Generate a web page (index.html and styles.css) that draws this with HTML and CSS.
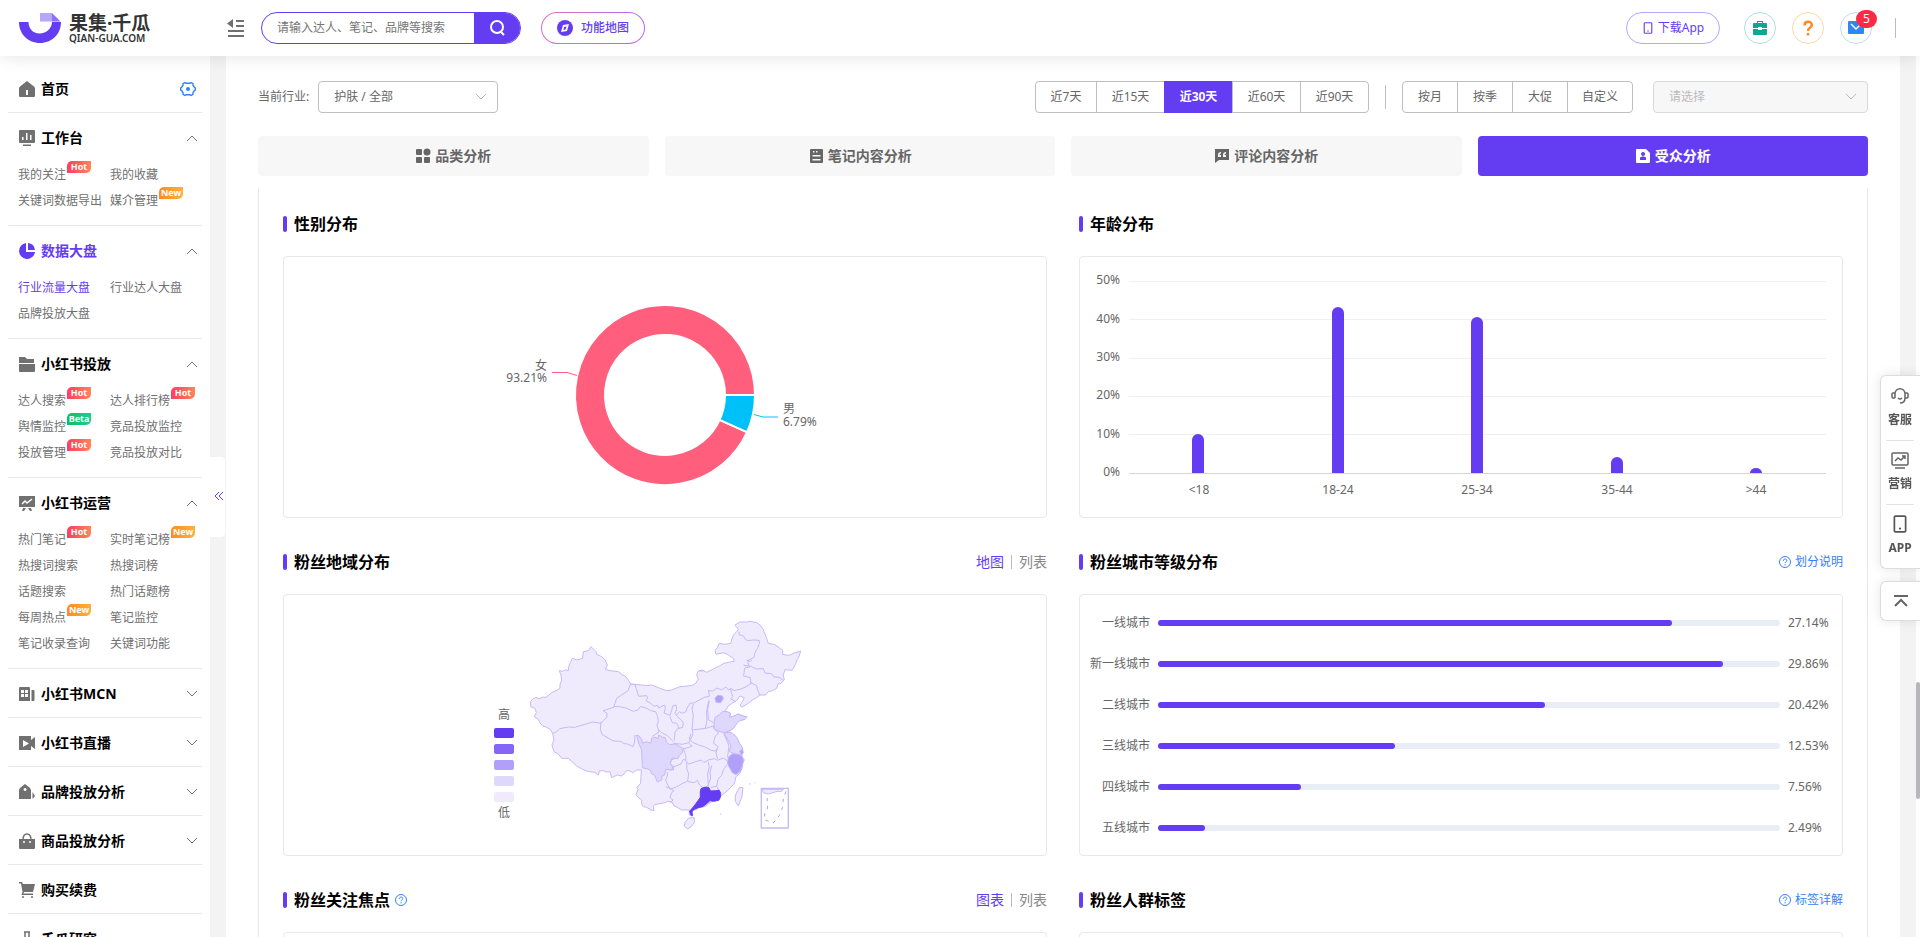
FILE: index.html
```
<!DOCTYPE html>
<html lang="zh-CN">
<head>
    <meta charset="UTF-8">
    <title>行业流量大盘 - 果集·千瓜</title>
    <link rel="stylesheet" href="styles.css">
</head>
<body>
    <svg class="defs" width="0" height="0">
        <symbol id="up" viewBox="0 0 12 12"><path d="M1 9l5-5 5 5" fill="none" stroke="currentColor"/></symbol>
        <symbol id="down" viewBox="0 0 12 12"><path d="M1 3l5 5 5-5" fill="none" stroke="currentColor"/></symbol>
        <symbol id="help" viewBox="0 0 12 12"><circle cx="6" cy="6" r="5.5" fill="none" stroke="currentColor"/><path d="M4.3 4.8c0-2.4 3.5-2.2 3.5-.2 0 1.200-1.800 1.300-1.800 2.600M6 8.200v1.200" fill="none" stroke="currentColor"/></symbol>
        <symbol id="phone" viewBox="0 0 16 16"><rect x="3" y="1" width="10" height="14" rx="1" fill="none" stroke="currentColor" stroke-width="1.500"/><circle cx="8" cy="12" r="1" fill="currentColor"/></symbol>
    </svg>

    <header class="header">
        <a class="logo" href="#">
            <svg width="42" height="30" viewBox="0 0 42 30"><path d="M0 9h9.500c0 6 4 11.500 11 11.500S33 15 33 9h9c0 12-9 21-21 21S0 21 0 9z" fill="#643df3"/><path d="M21 0h12v8.500H21z" fill="#b7a7fa"/><path d="M33 0l8.500 8.500H33z" fill="#8d70f7"/></svg>
            <span class="logo-text"><b>果集·千瓜</b><small>QIAN-GUA.COM</small></span>
        </a>
        <button class="fold" aria-label="收起菜单">
            <svg width="18" height="18" viewBox="0 0 18 18" fill="#707070"><path d="M0 4.500L6 0v9zM9 1h8v2H9zM9 6h8v2H9zM1 11h16v2H1zM1 16h16v2H1z"/></svg>
        </button>
        <form class="search">
            <input type="text" placeholder="请输入达人、笔记、品牌等搜索" aria-label="搜索">
            <button type="button" aria-label="搜索">
                <svg width="18" height="18" viewBox="0 0 18 18" fill="none" stroke="#fff" stroke-width="2"><circle cx="9" cy="8" r="6"/><path d="M13 13l3 3"/></svg>
            </button>
        </form>
        <button class="func-map">
            <svg width="16" height="16" viewBox="0 0 16 16"><circle cx="8" cy="8" r="8" fill="#643df3"/><path d="M6 5l6-1-2 7-6 1z" fill="#fff"/><path d="M7 7l2.500-.5-1 3L6.500 10z" fill="#643df3"/></svg>
            功能地图
        </button>
        <div class="header-right">
            <button class="download"><svg width="12" height="12"><use href="#phone"/></svg>下载App</button>
            <button class="round green" aria-label="工具箱">
                <svg width="14" height="14" viewBox="0 0 14 14" fill="#12a594"><path d="M4 2V0h6v2h3q1 0 1 1v4H9V6H5v1H0V3q0-1 1-1h3zm1 0h4V1H5zM0 8h5v1h4V8h5v5q0 1-1 1H1q-1 0-1-1z"/></svg>
            </button>
            <button class="round orange" aria-label="帮助">
                <svg width="14" height="16" viewBox="0 0 14 16"><path d="M3.500 5.500C3.500.5 11 .8 10.800 5 10.700 8 7 7.500 7 11M7 13v2.500" fill="none" stroke="#ff8a1f" stroke-width="2.500"/></svg>
            </button>
            <button class="round blue" aria-label="消息">
                <svg width="16" height="14" viewBox="0 0 16 14"><rect y="0" width="16" height="13" rx="1" fill="#2f86f6"/><path d="M3 3l5 5 5-5" fill="none" stroke="#fff" stroke-width="1.500"/></svg>
                <span class="count">5</span>
            </button>
            <i class="header-line"></i>
        </div>
    </header>

    <div class="layout">
        <nav class="sidebar">
            <section class="menu">
                <a class="menu-title" href="#">
                    <svg class="icon" viewBox="0 0 16 16"><path fill-rule="evenodd" d="M8 0l7 5.500q1 1 1 2V15q0 1-1 1H1q-1 0-1-1V7.500q0-1 1-2zM7 9v5h2V9z"/></svg>首页
                    <svg class="gear" viewBox="0 0 16 16"><path d="M5 1.500l1 .8h4l1-.8 2 1.200v1.800l1.500 2 .8.500v2l-.8.500-1.500 2v1.800l-2 1.200-1-.8H6l-1 .8-2-1.200v-1.800l-1.500-2L.7 9V7l.8-.5 1.500-2V2.700z" fill="none" stroke="currentColor" stroke-width="1.400"/><circle cx="8" cy="8" r="2" fill="currentColor"/></svg>
                </a>
            </section>
            <section class="menu">
                <a class="menu-title" href="#">
                    <svg class="icon" viewBox="0 0 16 16"><path fill-rule="evenodd" d="M1 0h14q1 0 1 1v11q0 1-1 1H1q-1 0-1-1V1q0-1 1-1zM3 7v3h1.500V7zM7 3v7h1.500V3zM11 5v5h1.500V5zM4 14.500h8V16H4z"/></svg>工作台
                    <svg class="arrow"><use href="#up"/></svg>
                </a>
                <div class="links">
                    <a href="#">我的关注<em class="hot">Hot</em></a><a href="#">我的收藏</a>
                    <a href="#">关键词数据导出</a><a href="#">媒介管理<em class="new">New</em></a>
                </div>
            </section>
            <section class="menu active">
                <a class="menu-title" href="#">
                    <svg class="icon" viewBox="0 0 16 16"><path d="M7 0v9h9A8 8 0 1 1 7 0zM9 0a8 8 0 0 1 7 7H9z"/></svg>数据大盘
                    <svg class="arrow"><use href="#up"/></svg>
                </a>
                <div class="links">
                    <a class="current" href="#">行业流量大盘</a><a href="#">行业达人大盘</a>
                    <a href="#">品牌投放大盘</a>
                </div>
            </section>
            <section class="menu">
                <a class="menu-title" href="#">
                    <svg class="icon" viewBox="0 0 16 16"><path d="M0 1h6l2 2h7v4H0zM0 8h16v7q0 1-1 1H1q-1 0-1-1z"/></svg>小红书投放
                    <svg class="arrow"><use href="#up"/></svg>
                </a>
                <div class="links">
                    <a href="#">达人搜索<em class="hot">Hot</em></a><a href="#">达人排行榜<em class="hot">Hot</em></a>
                    <a href="#">舆情监控<em class="beta">Beta</em></a><a href="#">竞品投放监控</a>
                    <a href="#">投放管理<em class="hot">Hot</em></a><a href="#">竞品投放对比</a>
                </div>
            </section>
            <section class="menu">
                <a class="menu-title" href="#">
                    <svg class="icon" viewBox="0 0 16 16"><path d="M0 1h16v11H0zM4 13h3l-2 3H3zM9 13h3l1 3h-2z"/><path d="M3 9l3-3 2 2 5-4" fill="none" stroke="#fff" stroke-width="1.500"/></svg>小红书运营
                    <svg class="arrow"><use href="#up"/></svg>
                </a>
                <div class="links">
                    <a href="#">热门笔记<em class="hot">Hot</em></a><a href="#">实时笔记榜<em class="new">New</em></a>
                    <a href="#">热搜词搜索</a><a href="#">热搜词榜</a>
                    <a href="#">话题搜索</a><a href="#">热门话题榜</a>
                    <a href="#">每周热点<em class="new">New</em></a><a href="#">笔记监控</a>
                    <a href="#">笔记收录查询</a><a href="#">关键词功能</a>
                </div>
            </section>
            <section class="menu">
                <a class="menu-title" href="#">
                    <svg class="icon" viewBox="0 0 16 16"><path fill-rule="evenodd" d="M1 1h9q1 0 1 1v13H0V2q0-1 1-1zM2 4v3h3V4zM6 4v3h3V4zM2 8v3h3V8zM6 8v3h3V8zM12.500 4h2q1 0 1 1v9q0 1-1 1h-2z"/></svg>小红书MCN
                    <svg class="arrow"><use href="#down"/></svg>
                </a>
            </section>
            <section class="menu">
                <a class="menu-title" href="#">
                    <svg class="icon" viewBox="0 0 16 16"><path fill-rule="evenodd" d="M0 1h12v4l4-3v12l-4-3v4H0zM4 5v7l6-3.500z"/></svg>小红书直播
                    <svg class="arrow"><use href="#down"/></svg>
                </a>
            </section>
            <section class="menu">
                <a class="menu-title" href="#">
                    <svg class="icon" viewBox="0 0 16 16"><path fill-rule="evenodd" d="M6 0l5 4 1 2v9H0V6l1-2zM6 4a1.500 1.500 0 1 0 .1 0zM13.500 8l2.500 4-2.500 3z"/></svg>品牌投放分析
                    <svg class="arrow"><use href="#down"/></svg>
                </a>
            </section>
            <section class="menu">
                <a class="menu-title" href="#">
                    <svg class="icon" viewBox="0 0 16 16"><path d="M0 6h16v9q0 1-1 1H1q-1 0-1-1z"/><path d="M4 7c0-8 8-8 8 0" fill="none" stroke="#707070" stroke-width="1.500"/><circle cx="5" cy="9" r="1" fill="#fff"/><circle cx="11" cy="9" r="1" fill="#fff"/></svg>商品投放分析
                    <svg class="arrow"><use href="#down"/></svg>
                </a>
            </section>
            <section class="menu">
                <a class="menu-title" href="#">
                    <svg class="icon" viewBox="0 0 16 16"><path d="M0 0h3l1 2h12l-2 8H5l-.5 1.500H14V13H2.500l1-3L2 1.500H0z"/><circle cx="4" cy="15" r="1"/><circle cx="13" cy="15" r="1"/></svg>购买续费
                </a>
            </section>
            <section class="menu">
                <a class="menu-title" href="#">
                    <svg class="icon" viewBox="0 0 16 16"><path d="M5 1h6M6 1v6l-5 8h14l-5-8V1" fill="none" stroke="#707070" stroke-width="1.500"/></svg>千瓜研究
                </a>
            </section>
        </nav>

        <div class="gutter">
            <button class="handle" aria-label="收起侧栏">
                <svg width="10" height="10" viewBox="0 0 10 10" fill="none" stroke="#643df3"><path d="M5 1L1 5l4 4M9 1L5 5l4 4"/></svg>
            </button>
        </div>

        <main class="main">
            <div class="toolbar">
                <label for="industry">当前行业:</label>
                <div class="select industry">
                    <select id="industry"><option>护肤 / 全部</option></select>
                    <svg class="select-arrow"><use href="#down"/></svg>
                </div>
                <div class="btn-group days">
                    <button>近7天</button><button>近15天</button><button class="on">近30天</button><button>近60天</button><button>近90天</button>
                </div>
                <i class="bar-line"></i>
                <div class="btn-group ranges">
                    <button>按月</button><button>按季</button><button>大促</button><button>自定义</button>
                </div>
                <div class="select period">
                    <select aria-label="时间段" disabled><option>请选择</option></select>
                    <svg class="select-arrow"><use href="#down"/></svg>
                </div>
            </div>

            <div class="tabs">
                <button><svg viewBox="0 0 16 16"><rect x="1" y="1" width="6" height="6" rx="1"/><circle cx="12" cy="4" r="3.500"/><rect x="1" y="9" width="6" height="6" rx="1"/><rect x="9" y="9" width="6" height="6" rx="1"/></svg>品类分析</button>
                <button><svg viewBox="0 0 16 16"><path fill-rule="evenodd" d="M3 1h11q1 0 1 1v12q0 1-1 1H3q-1 0-1-1V2q0-1 1-1zM5 3v1.500h1.500V3zM8 3v1.500h1.500V3zM4.500 7v1.500h8V7zM4.500 11v1.500h8V11z"/></svg>笔记内容分析</button>
                <button><svg viewBox="0 0 16 16"><path fill-rule="evenodd" d="M1 1h14v11H5l-4 3zM7 4q-3 0-3 3v2h3V7H5.500Q5.500 5.500 7 5.500zM12 4q-3 0-3 3v2h3V7h-1.500q0-1.500 1.500-1.500z"/></svg>评论内容分析</button>
                <button class="on"><svg viewBox="0 0 16 16"><path fill-rule="evenodd" d="M2 1h9l4 4v9q0 1-1 1H2q-1 0-1-1V2q0-1 1-1zM8 4a2 2 0 1 0 .1 0zM5 12h6V9.500L9 8.500H7L5 9.500z"/></svg>受众分析</button>
            </div>

            <div class="panel">
                <section class="block">
                    <div class="block-head"><h2>性别分布</h2></div>
                    <div class="card">
                        <svg class="chart" viewBox="0 0 762 260">
                            <path d="M463 175.200A90 90 0 1 1 471 138H441A60 60 0 1 0 435.600 162.800z" fill="#ff5f7c" stroke="#fff" stroke-width="2"/>
                            <path d="M471 138A90 90 0 0 1 463 175.200L435.600 162.800A60 60 0 0 0 441 138z" fill="#00c0fa" stroke="#fff" stroke-width="2"/>
                            <path d="M268 115.500h15l10 3" fill="none" stroke="#ff5f7c"/>
                            <path d="M470 157.500l9 2.500h15" fill="none" stroke="#00c0fa"/>
                            <text x="263" y="113" text-anchor="end">女</text>
                            <text x="263" y="125" text-anchor="end">93.21%</text>
                            <text x="499" y="156">男</text>
                            <text x="499" y="169">6.79%</text>
                        </svg>
                    </div>
                </section>

                <section class="block">
                    <div class="block-head"><h2>年龄分布</h2></div>
                    <div class="card">
                        <svg class="chart" viewBox="0 0 762 260">
                            <path d="M49 24.500h697M49 62.500h697M49 101.500h697M49 139.500h697M49 177.500h697" stroke="#f0f0f0"/>
                            <path d="M49 216.500h697" stroke="#d5d5d5"/>
                            <g fill="#643df3">
                                <path d="M112 216v-33a6 6 0 0 1 12 0v33z"/>
                                <path d="M252 216V56a6 6 0 0 1 12 0v160z"/>
                                <path d="M391 216V66a6 6 0 0 1 12 0v150z"/>
                                <path d="M531 216v-10a6 6 0 0 1 12 0v10z"/>
                                <path d="M670 216a6 5 0 0 1 12 0z"/>
                            </g>
                            <g text-anchor="end">
                                <text x="40" y="27">50%</text>
                                <text x="40" y="66">40%</text>
                                <text x="40" y="104">30%</text>
                                <text x="40" y="142">20%</text>
                                <text x="40" y="181">10%</text>
                                <text x="40" y="219">0%</text>
                            </g>
                            <g text-anchor="middle">
                                <text x="119" y="237">&lt;18</text>
                                <text x="258" y="237">18-24</text>
                                <text x="397" y="237">25-34</text>
                                <text x="537" y="237">35-44</text>
                                <text x="676" y="237">&gt;44</text>
                            </g>
                        </svg>
                    </div>
                </section>

                <section class="block">
                    <div class="block-head">
                        <h2>粉丝地域分布</h2>
                        <div class="switch"><a class="current" href="#">地图</a><i></i><a href="#">列表</a></div>
                    </div>
                    <div class="card">
                        <svg class="chart" viewBox="0 0 762 260">
                            <text x="214" y="124">高</text>
                            <rect x="210" y="133" width="20" height="10" rx="2" fill="#643df3"/>
                            <rect x="210" y="149" width="20" height="10" rx="2" fill="#8566f6"/>
                            <rect x="210" y="165" width="20" height="10" rx="2" fill="#b29ff9"/>
                            <rect x="210" y="181" width="20" height="10" rx="2" fill="#dfd8fd"/>
                            <rect x="210" y="197" width="20" height="10" rx="2" fill="#efebfd"/>
                            <text x="214" y="222">低</text>
                            <!-- map is drawn at three times its size -->
                            <g transform="translate(196 5) scale(.3333)" fill="#efebfd" stroke="#c5b9f8" stroke-width="3" stroke-linejoin="round">
                                <path d="M152 305L157 298 168 292 177 296 190 291 198 292 215 278 228 272 240 265 240 253 245 240 243 226 238 212 248 214 256 209 265 212 267 197 271 188 277 175 292 180 308 175 310 155 325 152 333 140 340 147 348 155 350 163 365 170 375 179 382 195 376 208 390 212 415 215 425 223 438 230 446 242 452 252 485 255 500 257 515 255 540 265 560 272 575 270 600 260 635 257 647 250 655 237 650 225 655 213 668 210 680 217 698 208 718 198 732 190 745 187 763 184 760 175 745 165 732 158 708 163 705 152 712 143 718 130 735 133 752 130 757 114 760 105 770 95 775 88 765 75 780 66 800 66 810 64 830 68 840 75 850 88 852 95 860 115 865 130 885 134 900 145 908 150 908 163 922 166 930 165 945 158 962 153 958 168 952 178 945 196 936 211 915 209 910 225 913 240 900 252 895 250 890 265 878 272 865 275 857 285 840 285 830 293 820 298 805 310 785 322 780 315 788 304 793 293 780 288 770 302 756 310 745 318 738 330 728 338 740 335 752 340 748 352 760 349 775 342 790 348 800 350 795 358 782 361 770 368 765 378 760 385 752 391 745 397 755 400 765 406 770 415 778 430 788 445 788 462 785 468 793 480 788 490 788 500 784 510 780 520 768 530 766 541 762 552 752 562 745 570 733 580 722 588 718 600 700 603 690 608 678 618 672 620 660 622 650 628 637 632 636 648 628 645 628 630 605 630 592 622 582 618 576 606 565 604 555 608 535 612 524 614 520 620 522 632 512 630 500 622 490 620 485 612 485 600 472 590 468 583 474 570 471 562 482 550 484 510 470 510 460 518 450 513 440 512 432 522 425 528 412 525 395 533 390 515 378 516 370 512 358 513 355 525 345 517 325 515 308 508 290 498 278 487 265 475 245 475 235 462 222 455 216 435 222 420 218 400 210 388 200 382 188 378 180 369 175 358 163 350 169 338 165 325 152 320z"/>
                                <g fill="none">
                                    <path d="M218 400l11-4 10-10 27-5 18 1 25-7 30-9 24 4 8-9 10-9 0-12-12-8 10-3 22-7 4-12 5-15 15-10 10-7 9-6 8-21M401 320l17 0 20 4 22 10 14-4 8-11 18 6 12 7 15 3 6 15 2 14-4 12 6 20-12 8-8 5M363 366l-2 22 5 15 8 5 17 10 10 5 22 1 8 7 12 1 16 8 5-14 1-21"/>
                                    <path d="M452 252l13 2 4 12 7 23 24-2 3 7-5 8 16 9 7 8 12-3 3 8 18-9 2 10-4 14 18 7 5-14 3-14 10-3 2 13-5 12 10 13 7 5 8 10-2 14-15 4-8 11-2 24M590 345l9-10 6 5 13-5 3-10 9-15 11-1 16-8 18-10 12-1 1-6-3-13 12 3 14-10 14 6 13-9 8 10 6-6 10 7 18-4 15-6 18-12-2-17-20-5 3-24 15-3-5-12 0-7 18-10 3-14 7-12 6-15 0-10-18-1-17 2-9-6-3-8-14-4 1-9"/>
                                    <path d="M537 390l8 8 17 9 18 18M640 312l-4 16 4 17-4 45M580 430l27 3 20-5 12-26-2-12 39-5 5-22-1-31 6-29M790 195l25 5 15 7 20-1 5 13 20 2 7 10 15 1 15 10M812 248l18 9 4 15 6 13M752 265l2 14 5 10-7 8 14 7M688 301l-3 18-2 9 2 31 18 10M676 386l24-8 4 10 12 11-10 9-4 14-1 8 14 10-9 14-14-4-19-10-17-5-18-8-10-10 5-16M628 430l8 9-26 8 4 10 4 12-1 14 10 9 17-6 20-6 8 8 13-8 19-4 8 5 19-7 10 8M712 446l-4 13 5 18M732 403l7 14 8 20-3 25-2 10M610 446l-13 12-4 13-20 10-2 10 10 10-1 9-24-2M580 500l22-7 8-15 8 3M620 487l1 22 5 12-3 22-18 9-14 8-20 8-9-16-5-12 6-15-2-9M624 545l20 3 8-7 7 14 12 10 14-9-2-35 5-19-3-17M684 558l8-24-2-17 5-20M692 562l18-3 4-22 11-11 6-18 10-14M720 577l-10-18M557 560l13 5 12 8-7 5-5 15 9 7-9 10"/>
                                    <path d="M570 350l7 18 13 2 8 15M656 212l12 2M800 180l10 5 5-5"/>
                                </g>
                                <path fill="#dfd8fd" d="M470 405L478 408 486 420 487 430 499 425 513 430 515 415 524 411 534 416 536 405 548 412 556 413 559 425 568 434 586 432 610 446 606 460 598 466 594 476 576 474 571 490 580 505 574 510 557 508 554 525 546 528 545 540 532 546 524 526 516 522 509 509 487 503 485 450 476 430z"/>
                                <path fill="#dfd8fd" d="M702 370L705 352 720 343 727 335 742 335 752 340 748 352 762 348 775 342 785 348 800 350 795 358 779 362 770 371 760 385 746 393 734 398 717 394 703 387zM732 400L745 397 758 400 770 412 779 430 788 445 788 460 774 464 760 460 748 455 753 437 744 420z"/>
                                <path fill="#b29ff9" d="M746 470L758 461 775 463 786 468 791 482 786 500 780 515 768 524 757 518 747 500 742 488zM705 295L713 286 727 288 730 296 722 308 708 307zM779 453L787 448 790 458 783 464z"/>
                                <path fill="#643df3" stroke="#643df3" d="M663 566L673 562 686 562 692 573 706 572 718 571 722 580 721 592 716 601 701 604 690 602 680 611 668 620 654 623 644 628 636 633 637 648 632 644 629 634 639 622 647 612 654 602 661 592 661 576z"/>
                                <path d="M615 667L626 654 643 653 643 668 633 681 623 687 613 679zM779 562L789 563 786 590 775 618 766 604 766 588 773 571z"/>
                                <path fill="none" stroke-width="4" d="M844 565h81v119h-81z"/>
                                <path d="M846 568h65l-8 7-11-1-26 8-15-3z"/>
                                <path fill="none" stroke="#b29ff9" stroke-dasharray="10 14" d="M918 574l-8 22-2 26-10 25-18 22-28-10 3-21 8-14-2-37"/>
                                <path d="M808 552h4M823 548h3M720 641l4 2"/>
                            </g>
                        </svg>
                    </div>
                </section>

                <section class="block">
                    <div class="block-head">
                        <h2>粉丝城市等级分布</h2>
                        <a class="explain" href="#"><svg width="12" height="12"><use href="#help"/></svg>划分说明</a>
                    </div>
                    <div class="card city-list">
                        <div class="city"><span class="name">一线城市</span><div class="track"><div class="fill" style="width: 82.7%"></div></div><span class="value">27.14%</span></div>
                        <div class="city"><span class="name">新一线城市</span><div class="track"><div class="fill" style="width: 90.9%"></div></div><span class="value">29.86%</span></div>
                        <div class="city"><span class="name">二线城市</span><div class="track"><div class="fill" style="width: 62.2%"></div></div><span class="value">20.42%</span></div>
                        <div class="city"><span class="name">三线城市</span><div class="track"><div class="fill" style="width: 38.1%"></div></div><span class="value">12.53%</span></div>
                        <div class="city"><span class="name">四线城市</span><div class="track"><div class="fill" style="width: 23%"></div></div><span class="value">7.56%</span></div>
                        <div class="city"><span class="name">五线城市</span><div class="track"><div class="fill" style="width: 7.6%"></div></div><span class="value">2.49%</span></div>
                    </div>
                </section>

                <section class="block">
                    <div class="block-head">
                        <h2>粉丝关注焦点</h2><a class="tip" href="#" aria-label="说明"><svg width="12" height="12"><use href="#help"/></svg></a>
                        <div class="switch"><a class="current" href="#">图表</a><i></i><a href="#">列表</a></div>
                    </div>
                    <div class="card"></div>
                </section>

                <section class="block">
                    <div class="block-head">
                        <h2>粉丝人群标签</h2>
                        <a class="explain" href="#"><svg width="12" height="12"><use href="#help"/></svg>标签详解</a>
                    </div>
                    <div class="card"></div>
                </section>
            </div>
        </main>
        <div class="scrollbar"><div class="thumb"></div></div>
    </div>

    <aside class="float">
        <div class="float-box">
            <a href="#"><svg width="18" height="18" viewBox="0 0 18 18" fill="none" stroke="#666" stroke-width="1.500"><path d="M4 11V7c0-7 10-7 10 0v4c0 4-2 5-5 5M4 6H2q-1 0-1 1v3q0 1 1 1h2M14 6h2q1 0 1 1v3q0 1-1 1h-2M7 11q2 2 4 0"/></svg>客服</a>
            <a href="#"><svg width="18" height="18" viewBox="0 0 18 18" fill="none" stroke="#666" stroke-width="1.500"><rect x="1" y="2" width="16" height="12" rx="1"/><path d="M4 10l3-3 3 2 4-4M11 5h3v3M4 17h10"/></svg>营销</a>
            <a href="#"><svg width="18" height="18"><use href="#phone"/></svg>APP</a>
        </div>
        <button class="float-top" aria-label="回到顶部">
            <svg width="14" height="12" viewBox="0 0 14 12" fill="none" stroke="#666" stroke-width="2"><path d="M0 1h14M1 11l6-6 6 6"/></svg>
        </button>
    </aside>
</body>
</html>
```
FILE: styles.css
```
* {
    box-sizing: border-box;
}
body {
    margin: 0;
    height: 100vh;
    overflow: hidden;
    display: flex;
    flex-direction: column;
    font: 12px/18px "Noto Sans", "Noto Sans CJK SC", sans-serif;
    color: #666;
    background: #fff;
}
a {
    color: inherit;
    text-decoration: none;
}
button, input, select {
    font: inherit;
    color: inherit;
    margin: 0;
    padding: 0;
    border: 0;
    background: none;
}
h2, em, i {
    margin: 0;
    font-style: normal;
}
svg {
    flex: none;
}
.defs {
    position: absolute;
}

/* header */
.header {
    flex: none;
    position: relative;
    z-index: 2;
    display: flex;
    align-items: center;
    height: 56px;
    padding: 0 24px 0 19px;
    background: #fff;
    box-shadow: 0 0 18px rgba(0, 0, 0, 0.12);
}
.logo {
    display: flex;
    gap: 8px;
    width: 208px;
    color: #333;
}
.logo-text {
    display: flex;
    flex-direction: column;
}
.logo-text b {
    font-size: 19px;
    line-height: 20px;
}
.logo-text small {
    font-size: 10px;
    line-height: 10px;
    font-weight: 600;
}
.fold {
    display: flex;
    width: 34px;
}
.search {
    display: flex;
    width: 260px;
    height: 32px;
    border: 1px solid #643df3;
    border-radius: 16px;
    overflow: hidden;
}
.search input {
    flex: 1;
    min-width: 0;
    padding-left: 15px;
    outline: none;
}
.search input::placeholder {
    color: #757575;
}
.search button {
    display: flex;
    align-items: center;
    justify-content: center;
    width: 46px;
    background: #643df3;
}
.func-map {
    display: flex;
    align-items: center;
    justify-content: center;
    gap: 8px;
    width: 104px;
    height: 32px;
    margin-left: 20px;
    border: 1px solid transparent;
    border-radius: 16px;
    background: linear-gradient(#fff, #fff) padding-box, linear-gradient(90deg, #dd72b8, #b26cf0) border-box;
    color: #643df3;
    font-weight: 500;
}
.header-right {
    display: flex;
    align-items: center;
    margin-left: auto;
}
.download {
    display: flex;
    align-items: center;
    justify-content: center;
    gap: 4px;
    width: 94px;
    height: 32px;
    margin-right: 8px;
    border: 1px solid #b7a7fa;
    border-radius: 16px;
    color: #643df3;
}
.round {
    position: relative;
    display: flex;
    align-items: center;
    justify-content: center;
    width: 32px;
    height: 32px;
    margin-left: 16px;
    border: 1px solid;
    border-radius: 50%;
}
.green {
    border-color: #a8e3da;
}
.orange {
    border-color: #fbd9a8;
}
.blue {
    border-color: #b9dcfd;
}
.count {
    position: absolute;
    top: -3px;
    left: 15px;
    width: 21px;
    height: 18px;
    border-radius: 9px;
    background: #fa2a44;
    color: #fff;
    font-size: 12px;
}
.header-line {
    width: 1px;
    height: 20px;
    margin-left: 23px;
    background: #bbb;
}

/* sidebar */
.layout {
    flex: 1;
    min-height: 0;
    display: flex;
}
.sidebar {
    flex: none;
    width: 210px;
    padding: 8px 8px 0;
    overflow: hidden;
}
.menu {
    border-bottom: 1px solid #e6e9ef;
}
.menu-title {
    display: flex;
    align-items: center;
    height: 48px;
    padding: 1px 4px 0 11px;
    font-size: 14px;
    font-weight: bold;
    color: #000;
}
.icon {
    width: 16px;
    height: 16px;
    margin-right: 6px;
    fill: #707070;
}
.gear {
    width: 16px;
    height: 16px;
    margin: 0 2px 0 auto;
    color: #3480f7;
}
.arrow {
    width: 12px;
    height: 12px;
    margin-left: auto;
    color: #707070;
}
.active .menu-title {
    color: #643df3;
}
.active .icon {
    fill: #643df3;
}
.links {
    display: grid;
    grid-template-columns: 92px 1fr;
    padding: 0 0 12px 10px;
}
.links a {
    display: flex;
    height: 26px;
    line-height: 28px;
    white-space: nowrap;
    color: #707070;
}
.links .current, .switch .current {
    color: #643df3;
}
.links em {
    width: 24px;
    height: 12px;
    margin-left: 1px;
    border-radius: 5px 0;
    font-size: 9px;
    line-height: 12px;
    font-weight: bold;
    text-align: center;
    color: #fff;
}
.hot {
    background: linear-gradient(90deg, #ff3d5e, #ff8557);
}
.new {
    background: linear-gradient(90deg, #ff8a1f, #ffb13d);
}
.beta {
    background: linear-gradient(90deg, #0bc05c, #19d092);
}
.gutter {
    flex: none;
    display: flex;
    align-items: center;
    width: 16px;
    background: #f3f3f3;
}
.handle {
    width: 15px;
    height: 80px;
    padding-left: 2px;
    border-radius: 0 4px 4px 0;
    background: #fff;
}

/* main */
.main {
    flex: 1;
    min-width: 0;
    padding: 25px 32px 0;
    overflow: hidden;
}
.toolbar {
    display: flex;
    align-items: center;
    height: 32px;
    margin-bottom: 23px;
}
.select {
    position: relative;
    height: 32px;
}
.select select {
    width: 100%;
    height: 100%;
    padding: 0 15px;
    border: 1px solid #bfbfbf;
    border-radius: 4px;
    appearance: none;
    opacity: 1;
}
.select select:disabled {
    background: #f7f7f7;
    border-color: #d9d9d9;
    color: #bbb;
}
.select-arrow {
    position: absolute;
    top: 10px;
    right: 11px;
    width: 12px;
    height: 12px;
    color: #bbb;
}
.industry {
    width: 180px;
    margin-left: 9px;
}
.period {
    width: 215px;
    margin-left: 20px;
}
.btn-group {
    display: grid;
    height: 32px;
    border: 1px solid #bfbfbf;
    border-radius: 4px;
}
.days {
    grid-template-columns: 60px repeat(4, 68px);
    margin-left: auto;
}
.ranges {
    grid-template-columns: 54px 55px 55px 65px;
}
.btn-group button + button {
    border-left: 1px solid #bfbfbf;
}
.btn-group .on {
    margin: -1px 0;
    background: #643df3;
    color: #fff;
    font-weight: bold;
}
.btn-group button + .on {
    border-color: #643df3;
}
.bar-line {
    width: 1px;
    height: 24px;
    margin: 0 16px;
    background: #bfbfbf;
}
.tabs {
    display: grid;
    grid-template-columns: repeat(4, 1fr);
    gap: 16px;
    margin-bottom: 12px;
}
.tabs button {
    display: flex;
    align-items: center;
    justify-content: center;
    gap: 4px;
    height: 40px;
    border-radius: 4px;
    background: #f7f7f7;
    font-size: 14px;
    font-weight: bold;
}
.tabs svg {
    width: 16px;
    height: 16px;
    fill: currentColor;
}
.tabs .on {
    background: #643df3;
    color: #fff;
}
.panel {
    display: grid;
    grid-template-columns: 1fr 1fr;
    gap: 32px;
    padding: 24px;
    border: solid #e8e8e8;
    border-width: 0 1px;
}
.block-head {
    display: flex;
    align-items: center;
    height: 24px;
    margin-bottom: 20px;
}
.block-head::before {
    content: "";
    width: 4px;
    height: 16px;
    margin-right: 7px;
    border-radius: 2px;
    background: #643df3;
}
.block-head h2 {
    font-size: 16px;
    line-height: 24px;
    color: #000;
}
.tip {
    display: flex;
    margin-left: 5px;
    color: #3480f7;
}
.switch {
    display: flex;
    align-items: center;
    margin-left: auto;
    font-size: 14px;
    color: #888;
}
.switch i {
    width: 1px;
    height: 14px;
    margin: 0 7px;
    background: #bbb;
}
.explain {
    display: flex;
    align-items: center;
    gap: 4px;
    margin-left: auto;
    color: #3480f7;
}
.card {
    min-height: 262px;
    border: 1px solid #e8e8e8;
    border-radius: 4px;
}
.chart {
    display: block;
    width: 100%;
    fill: #666;
}
.city-list {
    padding: 7px 11px 7px 9px;
}
.city {
    display: flex;
    align-items: center;
    gap: 8px;
    height: 41px;
}
.name {
    width: 61px;
    text-align: right;
}
.track {
    flex: 1;
    height: 6px;
    border-radius: 3px;
    background: #e9edf5;
}
.fill {
    height: 6px;
    border-radius: 3px;
    background: #643df3;
}
.value {
    width: 43px;
}
.scrollbar {
    flex: none;
    position: relative;
    width: 20px;
    border-right: 4px solid #fff;
    background: #f3f3f3;
}
.thumb {
    position: absolute;
    top: 71%;
    right: -4px;
    width: 4px;
    height: 117px;
    border-radius: 2px;
    background: #b5b7ba;
}

/* floating tools */
.float {
    position: fixed;
    right: 0;
    top: 375px;
    z-index: 3;
    width: 40px;
}
.float-box, .float-top {
    border: 1px solid #ddd;
    border-right: 0;
    border-radius: 6px 0 0 6px;
    background: #fff;
    box-shadow: 0 0 12px rgba(0, 0, 0, 0.1);
}
.float-box {
    padding: 0 6px 0 5px;
    margin-bottom: 12px;
}
.float-box a {
    display: flex;
    flex-direction: column;
    align-items: center;
    gap: 6px;
    height: 64px;
    padding-top: 11px;
    font-weight: bold;
    color: #555;
}
.float-box a + a {
    padding-top: 10px;
    border-top: 1px solid #e2e2e2;
}
.float-top {
    display: flex;
    align-items: center;
    justify-content: center;
    width: 100%;
    height: 40px;
}
```
